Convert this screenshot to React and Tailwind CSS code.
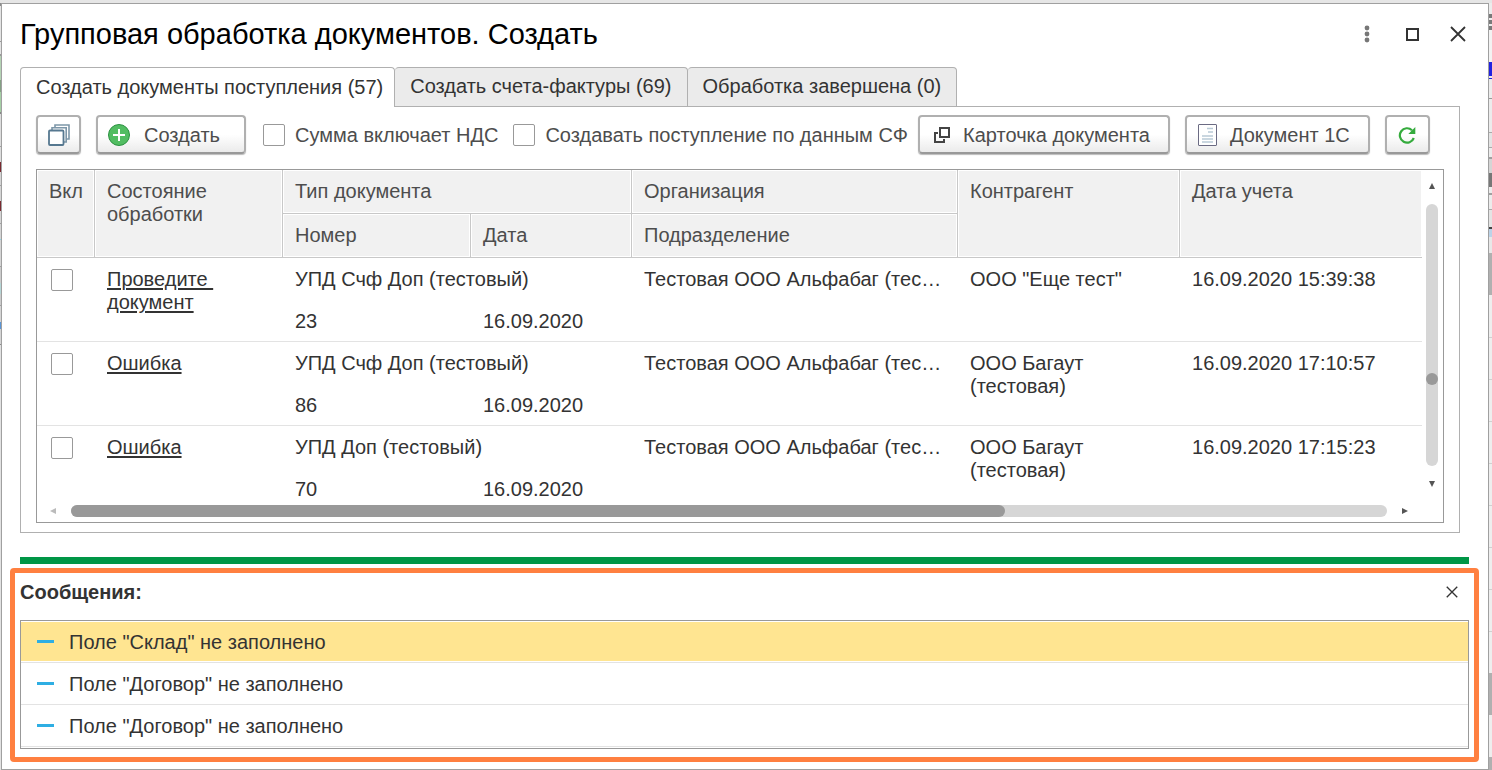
import React, { useState } from 'react';
import clsx from 'clsx';

const tabs = [
  { id: 'receipts', label: 'Создать документы поступления (57)' },
  { id: 'invoices', label: 'Создать счета-фактуры (69)' },
  { id: 'done', label: 'Обработка завершена (0)' },
];

const rows = [
  {
    status: 'Проведите\u00a0 документ',
    type: 'УПД Счф Доп (тестовый)',
    number: '23',
    date: '16.09.2020',
    org: 'Тестовая ООО Альфабаг (тес…',
    partner: 'ООО "Еще тест"',
    posted: '16.09.2020 15:39:38',
  },
  {
    status: 'Ошибка',
    type: 'УПД Счф Доп (тестовый)',
    number: '86',
    date: '16.09.2020',
    org: 'Тестовая ООО Альфабаг (тес…',
    partner: 'ООО Багаут (тестовая)',
    posted: '16.09.2020 17:10:57',
  },
  {
    status: 'Ошибка',
    type: 'УПД Доп (тестовый)',
    number: '70',
    date: '16.09.2020',
    org: 'Тестовая ООО Альфабаг (тес…',
    partner: 'ООО Багаут (тестовая)',
    posted: '16.09.2020 17:15:23',
  },
];

const messages = [
  'Поле "Склад" не заполнено',
  'Поле "Договор" не заполнено',
  'Поле "Договор" не заполнено',
];

// slivers of the page under the dialog: [height, colour]
const leftEdge = [
  [3, 'bg-[#8c8c8c]'], [35, 'bg-[#e4e4e4]'], [1, 'bg-[#999999]'], [12, 'bg-[#e4e4e4]'],
  [2, 'bg-[#999999]'], [24, 'bg-[#b4d3b4]'], [12, 'bg-[#84a184]'], [20, 'bg-[#a5cfa5]'],
  [2, 'bg-[#888888]'], [32, 'bg-[#dddddd]'], [1, 'bg-[#a0a0a0]'], [15, 'bg-[#dddddd]'],
  [10, 'bg-[#7a2930]'], [13, 'bg-[#d5d5d5]'], [1, 'bg-[#a0a0a0]'], [15, 'bg-[#d5d5d5]'],
  [10, 'bg-[#7a2930]'], [12, 'bg-[#d5d5d5]'], [1, 'bg-[#a0a0a0]'], [15, 'bg-[#d5d5d5]'],
  [1, 'bg-[#8fd6e8]'], [26, 'bg-[#d5d5d5]'], [1, 'bg-[#a0a0a0]'], [16, 'bg-[#cccccc]'],
  [11, 'bg-[#b5d6d6]'], [11, 'bg-[#cccccc]'], [1, 'bg-[#a0a0a0]'], [16, 'bg-[#d5d5d5]'],
  [7, 'bg-[#5a95d6]'], [15, 'bg-[#d5d5d5]'], [1, 'bg-[#8c8c8c]'],
];

const rightEdge = [
  [11, 'bg-[#ececec]'], [4, 'bg-[#7a7a7a]'], [2, 'bg-[#ececec]'], [4, 'bg-[#7a7a7a]'],
  [2, 'bg-[#ececec]'], [4, 'bg-[#7a7a7a]'], [32, 'bg-[#f3f3f3]'], [14, 'bg-[#2222e0]'],
  [2, 'bg-[#ececec]'], [1, 'bg-[#2222e0]'], [19, 'bg-[#ececec]'], [1, 'bg-[#999999]'],
  [33, 'bg-[#ececec]'], [1, 'bg-[#aaaaaa]'], [14, 'bg-[#e4e4e4]'], [1, 'bg-[#aaaaaa]'],
  [9, 'bg-[#ececec]'], [2, 'bg-[#a0a0a0]'], [14, 'bg-[#d5d5d5]'], [14, 'bg-[#777777]'],
  [6, 'bg-[#ececec]'], [2, 'bg-[#a0a0a0]'], [14, 'bg-[#ececec]'], [1, 'bg-[#aaaaaa]'],
  [17, 'bg-[#e4e4e4]'], [2, 'bg-[#444444]'], [8, 'bg-[#bcd3e8]'], [16, 'bg-[#e8e8e8]'],
  [42, 'bg-[#b0b0b0]'], [42, 'bg-[#eeeeee]'], [1, 'bg-[#d0d0d0]'], [41, 'bg-[#eeeeee]'],
  [1, 'bg-[#d0d0d0]'], [41, 'bg-[#eeeeee]'], [1, 'bg-[#d0d0d0]'], [41, 'bg-[#eeeeee]'],
  [1, 'bg-[#d0d0d0]'], [41, 'bg-[#eeeeee]'], [1, 'bg-[#d0d0d0]'], [41, 'bg-[#eeeeee]'],
  [1, 'bg-[#d0d0d0]'], [41, 'bg-[#eeeeee]'], [1, 'bg-[#d0d0d0]'], [41, 'bg-[#eeeeee]'],
  [1, 'bg-[#d0d0d0]'], [41, 'bg-[#eeeeee]'], [42, 'bg-[#b0b0b0]'], [42, 'bg-[#eeeeee]'],
  [13, 'bg-[#b0b0b0]'],
];

const Edge = ({ parts, className }) => (
  <div className={clsx('bg-[#e2e2e2] overflow-hidden', className)} aria-hidden="true">
    {parts.map(([height, color], i) => (
      <div key={i} className={color} style={{ height }} />
    ))}
  </div>
);

const CopiesIcon = () => (
  <svg width="22" height="22" viewBox="0 0 22 22" fill="none">
    <path d="M7 3V1h14v14h-2" stroke="#7c96a8" strokeWidth="1.6" />
    <path d="M4 6V3.8h14.2V18H16" stroke="#7c96a8" strokeWidth="1.6" />
    <rect x="1" y="6.5" width="14.5" height="14.5" rx="1" fill="#fff" stroke="#567890" strokeWidth="1.8" />
  </svg>
);

const PlusIcon = () => (
  <svg width="22" height="22" viewBox="0 0 22 22" fill="none">
    <circle cx="11" cy="11" r="10.5" fill="#52bd62" stroke="#2b9140" />
    <path d="M11 5v12M5 11h12" stroke="#fff" strokeWidth="2" />
  </svg>
);

const CardIcon = () => (
  <svg width="16" height="16" viewBox="0 0 16 16" fill="none" stroke="#444" strokeWidth="2">
    <rect x="6" y="1" width="9" height="9" />
    <path d="M4 6H1v9h9v-3" />
  </svg>
);

const DocIcon = () => (
  <svg width="19" height="22" viewBox="0 0 19 22" fill="none">
    <rect x=".5" y=".5" width="18" height="21" rx=".5" fill="#fff" stroke="#6b6b83" />
    <path d="M9 4.5h6M10 8h5M4 12h11M4 15h11M4 18h11" stroke="#b9cad6" strokeWidth="1.6" />
  </svg>
);

const RefreshIcon = () => (
  <svg width="18" height="18" viewBox="0 0 18 18" fill="none">
    <path d="M14 4.2A7.2 7.2 0 1 0 15.8 12" stroke="#35ab3d" strokeWidth="2.2" />
    <path d="M17.3 1v7h-7z" fill="#35ab3d" />
  </svg>
);

const CloseIcon = ({ size }) => (
  <svg width={size} height={size} viewBox="0 0 16 16" fill="none" stroke="#333" strokeWidth="1.8">
    <path d="M1 1l14 14M15 1L1 15" />
  </svg>
);

const Arrow = ({ d, fill = '#555' }) => (
  <svg width="8" height="8" viewBox="0 0 8 8" className="shrink-0" fill={fill}>
    <path d={d} />
  </svg>
);

const ToolButton = ({ label, className, children }) => (
  <button
    type="button"
    aria-label={label}
    className={clsx(
      'h-[39px] shrink-0 flex items-center border-2 border-[#b0b0b0] border-b-[#999999] rounded bg-linear-to-b from-white from-50% to-[#ebebeb] shadow-[0_1px_1px_#bbbbbb] whitespace-nowrap',
      className
    )}
  >
    {children}
  </button>
);

const checkboxStyle =
  'appearance-none block shrink-0 w-[22px] h-[22px] bg-white border border-[#999999] rounded-xs checked:bg-[#52bd62]';

const Th = ({ className, ...props }) => (
  <th
    className={clsx(
      'bg-[#f1f1f1] border-b border-[#c8c8c8] shadow-[inset_0_0_0_1px_#fff] px-3 pt-[10px] text-left align-top font-normal text-[#4d4d4d]',
      className
    )}
    {...props}
  />
);

const Td = ({ className, ...props }) => (
  <td className={clsx('px-3 pt-[10px] align-top', className)} {...props} />
);

const DocumentsTable = () => (
  <table className="w-full table-fixed border-separate border-spacing-0 leading-[23px]">
    <colgroup>
      <col className="w-[58px]" />
      <col className="w-[188px]" />
      <col className="w-[188px]" />
      <col className="w-[161px]" />
      <col className="w-[326px]" />
      <col className="w-[222px]" />
      <col />
    </colgroup>
    <thead>
      <tr className="h-11">
        <Th rowSpan={2} className="border-r">Вкл</Th>
        <Th rowSpan={2} className="border-r">Состояние обработки</Th>
        <Th colSpan={2} className="border-r">Тип документа</Th>
        <Th className="border-r">Организация</Th>
        <Th rowSpan={2} className="border-r">Контрагент</Th>
        <Th rowSpan={2}>Дата учета</Th>
      </tr>
      <tr className="h-11">
        <Th className="border-r">Номер</Th>
        <Th className="border-r">Дата</Th>
        <Th className="border-r">Подразделение</Th>
      </tr>
    </thead>
    {rows.map((row) => (
      <tbody key={row.posted}>
        <tr className="h-[42px]">
          <Td rowSpan={2} className="border-b border-[#e3e3e3]">
            <input type="checkbox" aria-label={row.type} className={clsx(checkboxStyle, 'mx-[2px] mt-px')} />
          </Td>
          <Td rowSpan={2} className="border-b border-[#e3e3e3]">
            <a href="#status" className="underline underline-offset-2">{row.status}</a>
          </Td>
          <Td colSpan={2}>{row.type}</Td>
          <Td className="whitespace-nowrap">{row.org}</Td>
          <Td rowSpan={2} className="border-b border-[#e3e3e3]">{row.partner}</Td>
          <Td rowSpan={2} className="border-b border-[#e3e3e3]">{row.posted}</Td>
        </tr>
        <tr className="h-[42px]">
          <Td className="border-b border-[#e3e3e3]">{row.number}</Td>
          <Td className="border-b border-[#e3e3e3]">{row.date}</Td>
          <Td className="border-b border-[#e3e3e3]" />
        </tr>
      </tbody>
    ))}
  </table>
);

const App = () => {
  const [activeTab, setActiveTab] = useState('receipts');

  return (
    <div className="min-h-screen flex flex-col bg-[#e6e6e6] pt-[3px] font-['Liberation_Sans',Arial,sans-serif] text-[20px] leading-6 text-[#333333]">
      <div className="flex-1 flex">
        <Edge parts={leftEdge} className="w-px" />

        <div className="flex-1 min-w-0 flex flex-col bg-white border border-[#a0a0a0]">
          <header className="h-[63px] pb-[3px] flex items-center justify-between pl-[18px] pr-[22px]">
            <h1 className="text-[29px] leading-8 text-black">Групповая обработка документов. Создать</h1>
            <div className="flex items-center gap-9">
              <button type="button" aria-label="Ещё">
                <svg width="6" height="18" viewBox="0 0 6 18" fill="#777">
                  <circle cx="3" cy="3" r="2.4" />
                  <circle cx="3" cy="9" r="2.4" />
                  <circle cx="3" cy="15" r="2.4" />
                </svg>
              </button>
              <button type="button" aria-label="Развернуть">
                <svg width="13" height="13" viewBox="0 0 13 13" fill="none" stroke="#333" strokeWidth="2">
                  <rect x="1" y="1" width="11" height="11" />
                </svg>
              </button>
              <button type="button" aria-label="Закрыть" className="-ml-[5px]">
                <CloseIcon size={16} />
              </button>
            </div>
          </header>

          <div className="pl-[18px] pr-7">
            <div role="tablist" className="flex relative z-10">
              {tabs.map((tab, i) => (
                <button
                  key={tab.id}
                  type="button"
                  role="tab"
                  aria-selected={activeTab === tab.id}
                  onClick={() => setActiveTab(tab.id)}
                  className={clsx(
                    'h-10 -mb-px pl-[15px] pb-[2px] border-t border-r border-[#b0b0b0] rounded-t-sm whitespace-nowrap',
                    i === 0 ? 'border-l pr-[11px]' : 'pr-[15px]',
                    activeTab === tab.id ? 'bg-white' : 'bg-[#ebebeb] border-b'
                  )}
                >
                  {tab.label}
                </button>
              ))}
            </div>

            <div role="tabpanel" className="border border-[#b0b0b0] px-[15px] pt-2 pb-[9px]">
              <div className="flex items-center text-[#4d4d4d]">
                <ToolButton label="Копировать" className="w-[45px] justify-center">
                  <CopiesIcon />
                </ToolButton>
                <ToolButton className="ml-[15px] pl-[10px] pr-6 gap-[14px]">
                  <PlusIcon />
                  Создать
                </ToolButton>
                <label className="ml-[17px] flex items-center gap-[10px] whitespace-nowrap">
                  <input type="checkbox" className={checkboxStyle} />
                  Сумма включает НДС
                </label>
                <label className="ml-[15px] flex items-center gap-[10px] whitespace-nowrap">
                  <input type="checkbox" className={checkboxStyle} />
                  Создавать поступление по данным СФ
                </label>
                <ToolButton className="ml-[10px] pl-[14px] pr-[18px] gap-[13px]">
                  <CardIcon />
                  Карточка документа
                </ToolButton>
                <ToolButton className="ml-[15px] pl-[11px] pr-[18px] gap-[13px]">
                  <DocIcon />
                  Документ 1С
                </ToolButton>
                <ToolButton label="Обновить" className="ml-[15px] w-[45px] justify-center">
                  <RefreshIcon />
                </ToolButton>
              </div>

              <div className="mt-[15px] border border-[#999999]">
                <div className="flex h-[334px]">
                  <div className="flex-1 min-w-0 overflow-hidden">
                    <DocumentsTable />
                  </div>
                  <div className="w-[21px] pr-[2px] pt-3 pb-4 flex flex-col items-center gap-[14px]">
                    <Arrow d="M4 1l3 6H1z" />
                    <div className="w-3 flex-1 flex flex-col justify-center rounded-full bg-[#d6d6d6]">
                      <div className="h-3 mt-[87px] rounded-full bg-[#999999]" />
                    </div>
                    <Arrow d="M4 7L1 1h6z" />
                  </div>
                </div>
                <div className="h-[18px] pb-1 pl-3 pr-[34px] flex items-center gap-[14px]">
                  <Arrow d="M1 4l6-3v6z" fill="#bbb" />
                  <div className="h-3 flex-1 rounded-full bg-[#d6d6d6]">
                    <div className="h-3 w-[71%] rounded-full bg-[#999999]" />
                  </div>
                  <Arrow d="M7 4L1 7V1z" />
                </div>
              </div>
            </div>
          </div>

          <div className="mt-6 ml-[18px] mr-[19px] h-[7px] bg-[#009646]" />

          <section className="mt-1 mb-[7px] ml-2 mr-[9px] px-[5px] pb-2 border-[5px] border-[#ff8040] rounded-sm">
            <div className="h-[47px] pb-[10px] pr-[11px] flex items-center justify-between">
              <h2 className="font-bold">Сообщения:</h2>
              <button type="button" aria-label="Закрыть сообщения">
                <CloseIcon size={12} />
              </button>
            </div>
            <ul className="border border-[#999999] pb-px">
              {messages.map((text, i) => (
                <li key={i} className="h-[42px] py-px border-b border-[#e3e3e3]">
                  <div className={clsx('h-full pl-4 flex items-center gap-[15px]', i === 0 && 'bg-[#ffe591]')}>
                    <span className="w-[17px] h-[3px] bg-[#2eaee3]" />
                    {text}
                  </div>
                </li>
              ))}
            </ul>
          </section>
        </div>

        <Edge parts={rightEdge} className="w-[3px]" />
      </div>
    </div>
  );
};

export default App;
